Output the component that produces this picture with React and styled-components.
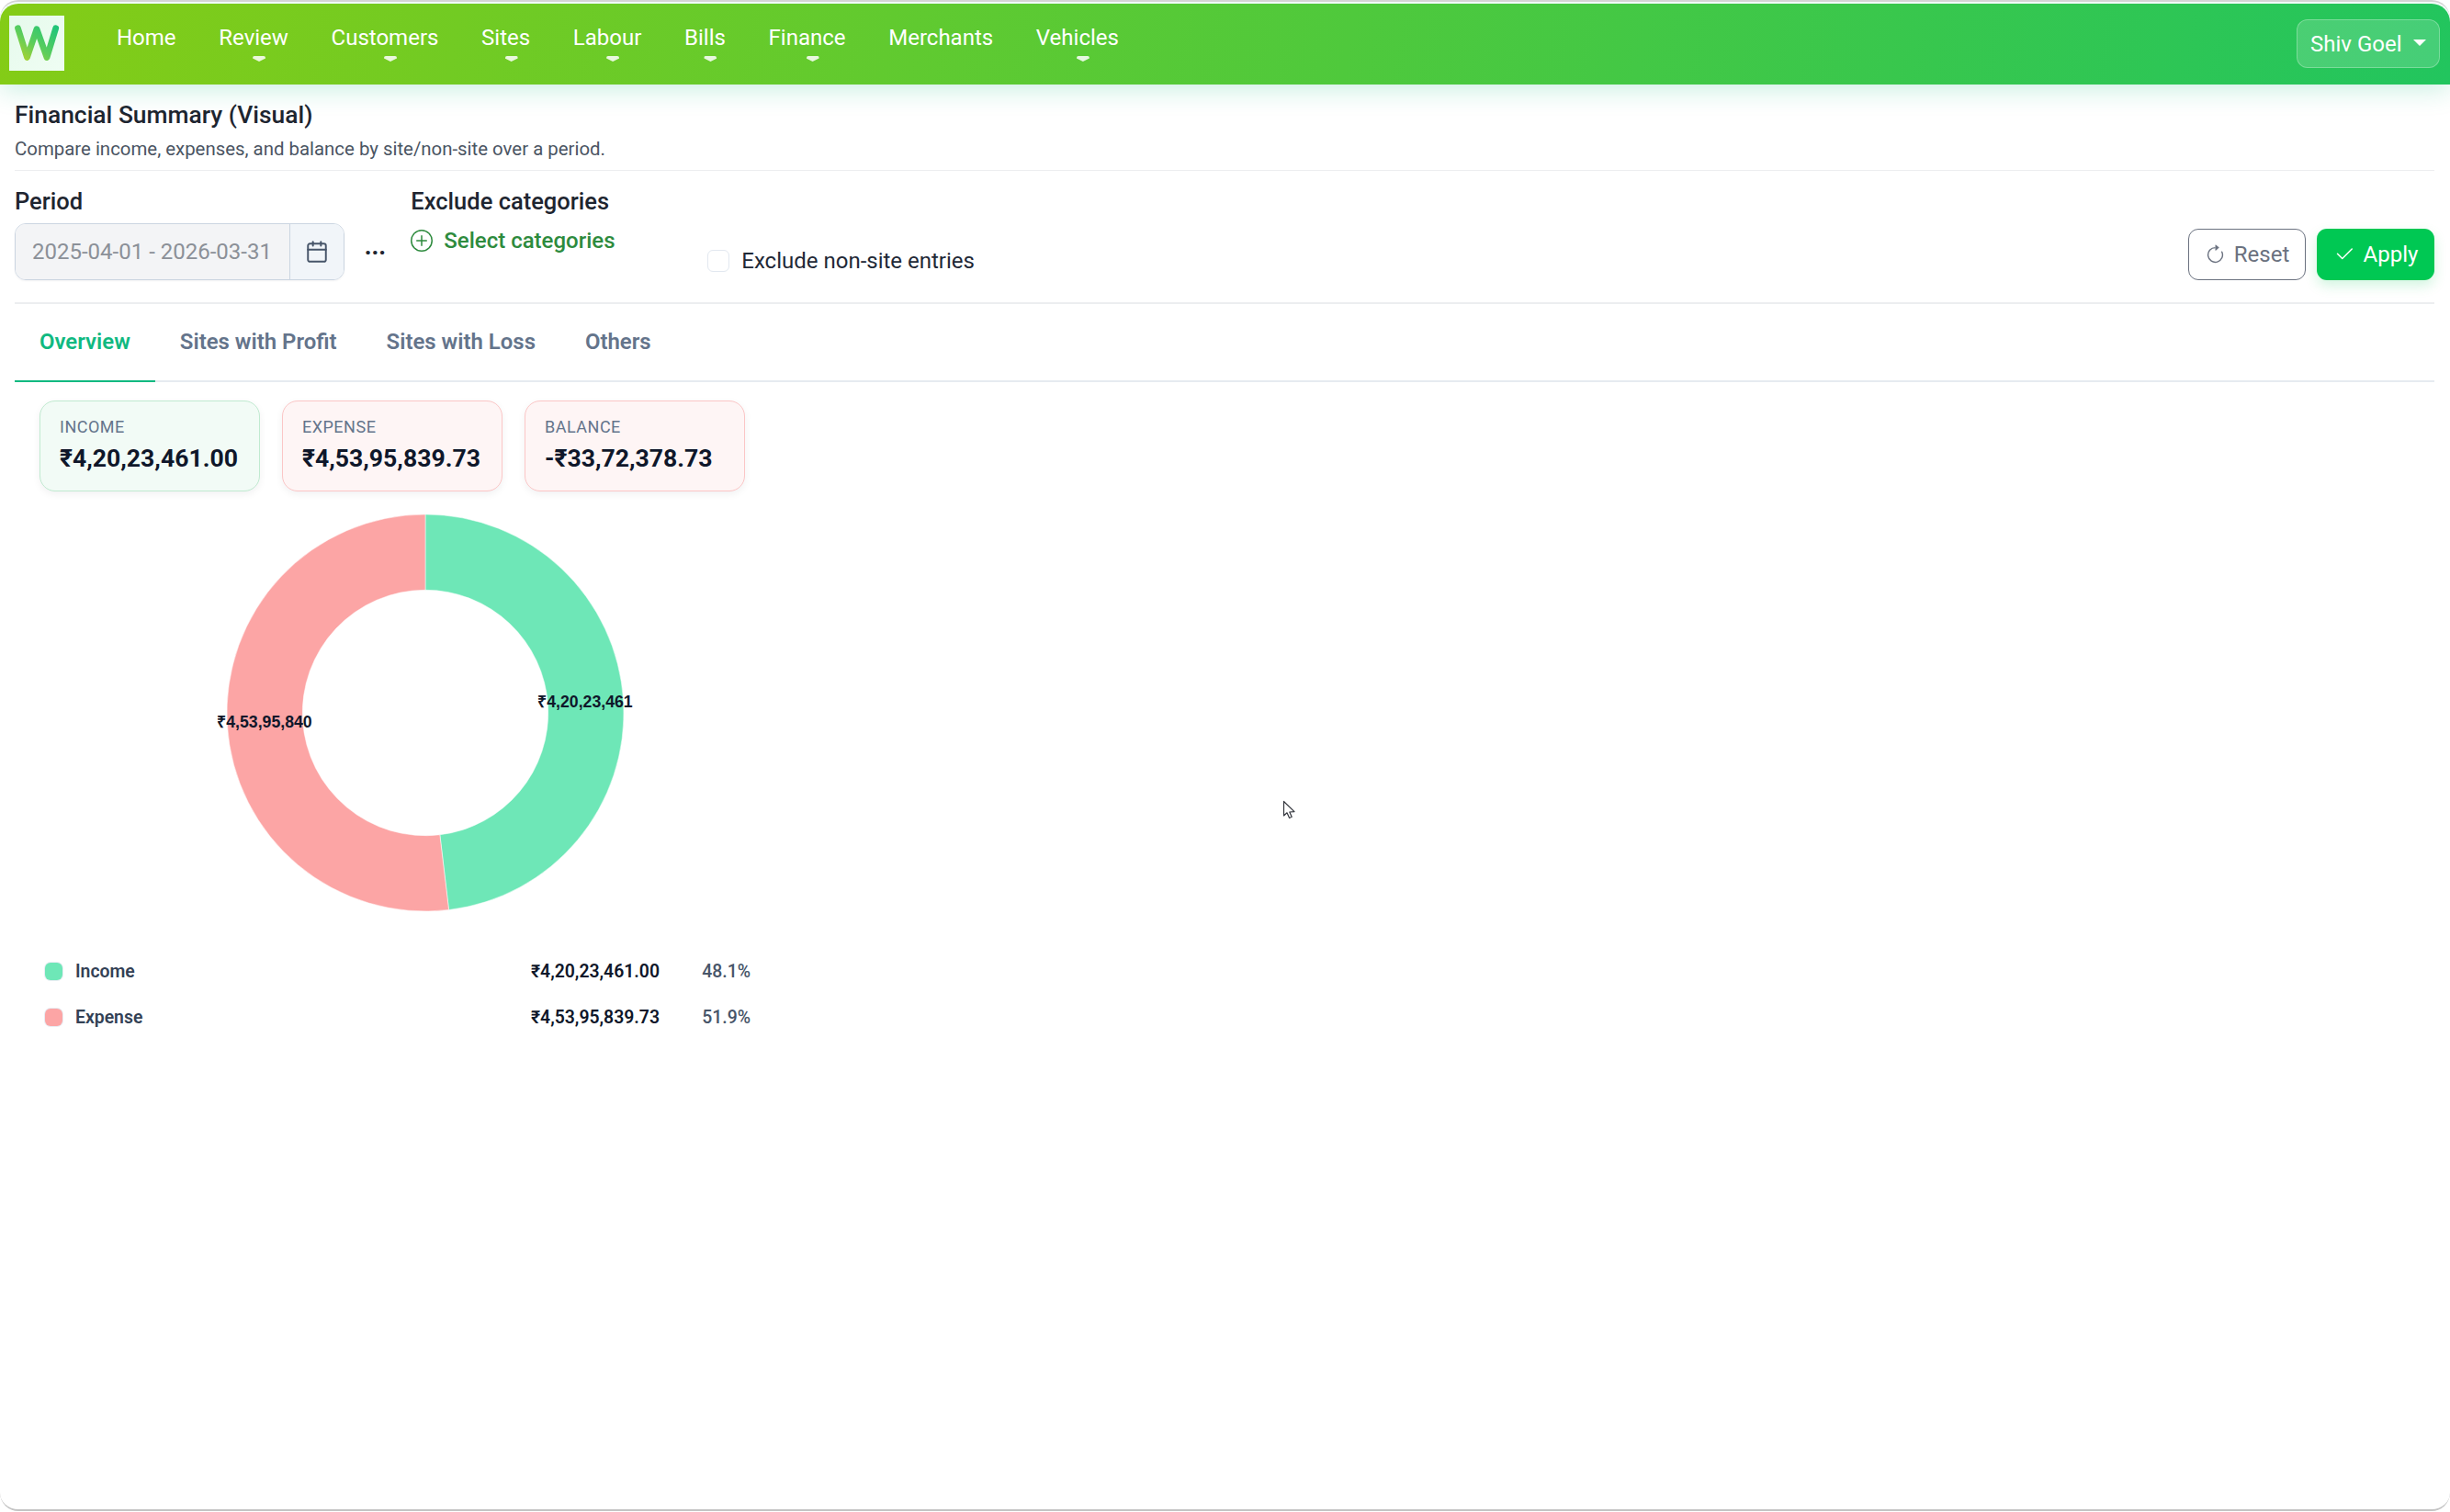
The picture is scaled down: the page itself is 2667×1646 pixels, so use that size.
import React from "react";
import styled, { createGlobalStyle } from "styled-components";
import { Calendar } from "lucide-react";
import { BsArrowClockwise, BsCheck2, BsPlusCircle } from "react-icons/bs";

const GlobalStyle = createGlobalStyle`
  html, body {
    margin: 0;
    padding: 0;
    background: #fff;
  }
  body {
    font-family: Roboto, "Noto Sans", sans-serif;
    color: #1f2937;
  }
  * {
    box-sizing: border-box;
  }
`;

const Frame = styled.div`
  position: relative;
  width: 2667px;
  height: 1645px;
  padding-top: 2px;
  background: #fff;
  border-top: 2px solid #d4d4d4;
  border-bottom: 2px solid #c4c4c4;
  border-radius: 20px;
  overflow: hidden;
`;

const Navbar = styled.nav`
  display: flex;
  align-items: center;
  height: 88px;
  padding: 0 11px 0 10px;
  background: linear-gradient(100deg, #84cc16 0%, #4fc93c 55%, #22c55e 100%);
  box-shadow: 0 6px 28px rgba(16, 185, 129, 0.22);
  border-radius: 20px 20px 0 0;
  position: relative;
`;

const Brand = styled.div`
  display: flex;
  width: 60px;
  height: 60px;
  margin-top: -2px;
  background: linear-gradient(135deg, #e6faec, #effdf3);
`;

const NavList = styled.div`
  display: flex;
  gap: 46.7px;
  margin-left: 57px;
  flex: 1;
`;

const NavLink = styled.a`
  position: relative;
  display: block;
  padding-bottom: 14px;
  color: #fff;
  font-size: 24px;
  line-height: 28px;
  white-space: nowrap;
`;

const NavCaret = styled.span`
  position: absolute;
  left: calc(50% - 1px);
  top: 34px;
  width: 14px;
  height: 6px;
  background: rgba(255, 255, 255, 0.85);
  clip-path: polygon(0 0, 100% 0, 100% 40%, 50% 100%, 0 40%);
  border-radius: 2px;
`;

const UserButton = styled.button`
  display: flex;
  align-items: center;
  width: 156px;
  height: 53px;
  margin-top: -1px;
  padding: 0 14px;
  background: rgba(255, 255, 255, 0.16);
  border: 1px solid rgba(255, 255, 255, 0.28);
  border-radius: 12px;
  color: #fff;
  font: 400 24px Roboto, sans-serif;
  white-space: nowrap;
`;

const UserCaret = styled.span`
  margin-left: 13px;
  margin-top: -3px;
  width: 0;
  height: 0;
  border-left: 7px solid transparent;
  border-right: 7px solid transparent;
  border-top: 7px solid #fff;
`;

const Header = styled.header`
  margin: 0 17px 0 16px;
  padding: 17px 0 9px;
  border-bottom: 1px solid #eceef0;
`;

const Title = styled.h1`
  margin: 0;
  font-size: 26.4px;
  font-weight: 500;
  line-height: 32px;
  color: #1e2530;
`;

const Subtitle = styled.p`
  margin: 7px 0 0;
  font-size: 20.4px;
  line-height: 28px;
  color: #4b5563;
`;

const FilterBar = styled.section`
  display: flex;
  align-items: flex-end;
  margin: 0 17px 0 16px;
  height: 145px;
  padding-bottom: 24px;
  border-bottom: 2px solid #eceef0;
`;

const Label = styled.div`
  font-size: 25.5px;
  font-weight: 500;
  line-height: 30px;
  color: #1e2530;
`;

const DateGroup = styled.div`
  display: flex;
  width: 359px;
  height: 62px;
  margin-top: 9px;
  border: 1px solid #cbd5e1;
  border-radius: 12px;
  overflow: hidden;
  box-shadow: 0 1px 2px rgba(15, 23, 42, 0.05);
`;

const DateValue = styled.div`
  flex: 1;
  padding-left: 18px;
  background: #f3f4f6;
  color: #8b9098;
  font-size: 24px;
  line-height: 60px;
  white-space: nowrap;
`;

const DateIcon = styled.div`
  display: flex;
  align-items: center;
  justify-content: center;
  width: 59px;
  background: #f1f5f9;
  border-left: 1px solid #cbd5e1;
  color: #475569;
`;

const MoreDots = styled.span`
  margin: 0 27px 24px 22px;
  font-size: 24px;
  font-weight: 900;
  line-height: 24px;
  color: #1e2530;
  letter-spacing: 0.5px;
`;

const CategoryGroup = styled.div`
  width: 323px;
  height: 101px;
`;

const SelectLink = styled.a`
  display: flex;
  align-items: center;
  gap: 12px;
  margin-top: 14px;
  font-size: 24px;
  font-weight: 500;
  line-height: 28px;
  color: #2e8b3e;
`;

const CheckRow = styled.label`
  display: flex;
  align-items: center;
  gap: 13px;
  margin-bottom: 8px;
  font-size: 24px;
  line-height: 26px;
  color: #1f2937;
`;

const CheckBox = styled.span`
  width: 24px;
  height: 24px;
  background: #fff;
  border: 1px solid #e2e8f0;
  border-radius: 6px;
`;

const Actions = styled.div`
  display: flex;
  gap: 12px;
  margin-left: auto;
`;

const ActionButton = styled.button`
  display: flex;
  align-items: center;
  justify-content: center;
  gap: 9px;
  width: 128px;
  height: 56px;
  padding: 0;
  border-radius: 11px;
  font: 400 24px Roboto, sans-serif;
  color: ${(p) => (p.$primary ? "#fff" : "#6b7280")};
  background: ${(p) => (p.$primary ? "#00c853" : "#fff")};
  border: ${(p) => (p.$primary ? "none" : "1.5px solid #6b7280")};
  box-shadow: ${(p) => (p.$primary ? "0 6px 14px rgba(0, 200, 83, 0.18)" : "none")};
`;

const TabBar = styled.div`
  display: flex;
  margin: 0 17px 0 16px;
  border-bottom: 2px solid #e6ebf0;
`;

const Tab = styled.div`
  height: 85px;
  margin-bottom: -2px;
  padding: 0 27px;
  font-size: 23.95px;
  font-weight: 600;
  line-height: 83px;
  color: ${(p) => (p.$active ? "#10b981" : "#64748b")};
  border-bottom: 2px solid ${(p) => (p.$active ? "#10b981" : "transparent")};
`;

const Cards = styled.div`
  display: flex;
  gap: 24px;
  margin: 20px 0 0 43px;
`;

const Card = styled.div`
  width: 240px;
  height: 99px;
  padding: 17px 0 0 21px;
  border-radius: 17px;
  border: 1px solid ${(p) => (p.$tone === "good" ? "#c0ead0" : "#fbc6c6")};
  background: ${(p) => (p.$tone === "good" ? "#f2fbf6" : "#fef5f5")};
  box-shadow: 0 3px 8px rgba(15, 23, 42, 0.06);
`;

const CardLabel = styled.div`
  font-size: 18px;
  letter-spacing: 0.5px;
  line-height: 22px;
  color: #64748b;
`;

const CardValue = styled.div`
  margin-top: 6px;
  font-size: 26.6px;
  font-weight: 700;
  line-height: 34px;
  color: #0f172a;
  white-space: nowrap;
`;

const ChartBox = styled.div`
  width: 480px;
  height: 480px;
  margin: 1px 0 0 223px;
`;

const ChartLabel = styled.text`
  font-family: "Liberation Sans", Arial, sans-serif;
  font-size: 17.7px;
  font-weight: 700;
  fill: #0f172a;
  text-anchor: middle;
  dominant-baseline: central;
`;

const Legend = styled.div`
  width: 768px;
  margin: 16px 0 0 49px;
`;

const LegendRow = styled.div`
  display: flex;
  align-items: center;
  height: 50px;
  font-size: 19.4px;
`;

const Swatch = styled.span`
  width: 19px;
  height: 19px;
  margin-right: 14px;
  border-radius: 6px;
  background: ${(p) => p.$color};
  box-shadow: 0 0 0 1px #e8edf3;
`;

const LegendName = styled.span`
  flex: 1;
  font-weight: 600;
  color: #334155;
`;

const LegendAmount = styled.span`
  font-weight: 600;
  color: #0f172a;
`;

const LegendPct = styled.span`
  width: 99px;
  text-align: right;
  font-weight: 500;
  color: #475569;
`;

const Cursor = styled.svg`
  position: absolute;
  left: 1396px;
  top: 869px;
`;

const navItems = [
  { label: "Home" },
  { label: "Review", caret: true },
  { label: "Customers", caret: true },
  { label: "Sites", caret: true },
  { label: "Labour", caret: true },
  { label: "Bills", caret: true },
  { label: "Finance", caret: true },
  { label: "Merchants" },
  { label: "Vehicles", caret: true },
];

const tabs = ["Overview", "Sites with Profit", "Sites with Loss", "Others"];

const cards = [
  { label: "INCOME", value: "₹4,20,23,461.00", tone: "good" },
  { label: "EXPENSE", value: "₹4,53,95,839.73", tone: "bad" },
  { label: "BALANCE", value: "-₹33,72,378.73", tone: "bad" },
];

const legend = [
  { name: "Income", amount: "₹4,20,23,461.00", pct: "48.1%", color: "#6ee7b7" },
  { name: "Expense", amount: "₹4,53,95,839.73", pct: "51.9%", color: "#fca5a5" },
];

// donut slice, angles in degrees clockwise from 12 o'clock
const slice = (cx, cy, r1, r2, from, to) => {
  const pt = (r, a) => {
    const rad = ((a - 90) * Math.PI) / 180;
    return `${cx + r * Math.cos(rad)} ${cy + r * Math.sin(rad)}`;
  };
  const large = to - from > 180 ? 1 : 0;
  return `M${pt(r1, from)} A${r1} ${r1} 0 ${large} 1 ${pt(r1, to)} L${pt(r2, to)} A${r2} ${r2} 0 ${large} 0 ${pt(r2, from)} Z`;
};

const Logo = () => (
  <svg width="60" height="60" viewBox="0 0 60 60">
    <defs>
      <linearGradient id="logoStroke" x1="0" y1="1" x2="1" y2="0">
        <stop offset="0" stopColor="#a8cf1e" />
        <stop offset="0.45" stopColor="#4fc94f" />
        <stop offset="1" stopColor="#10c06e" />
      </linearGradient>
    </defs>
    <path
      d="M9.5 13.7 L19.5 45.5 L30 14.7 L41 45.5 L50.7 13.7"
      fill="none"
      stroke="url(#logoStroke)"
      strokeWidth="6.8"
      strokeLinecap="round"
      strokeLinejoin="round"
      opacity="0.92"
    />
  </svg>
);

const Donut = () => (
  <ChartBox>
    <svg width="480" height="480" viewBox="0 0 480 480">
      <path d={slice(240, 240, 216, 133.7, 0, 173.2)} fill="#6ee7b7" stroke="#fff" strokeWidth="0.5" />
      <path d={slice(240, 240, 216, 133.7, 173.2, 360)} fill="#fca5a5" stroke="#fff" strokeWidth="0.5" />
      <ChartLabel x="414" y="228">₹4,20,23,461</ChartLabel>
      <ChartLabel x="65" y="250">₹4,53,95,840</ChartLabel>
    </svg>
  </ChartBox>
);

export default function App() {
  return (
    <>
      <GlobalStyle />
      <Frame>
        <Navbar>
          <Brand>
            <Logo />
          </Brand>
          <NavList>
            {navItems.map((item) => (
              <NavLink key={item.label}>
                {item.label}
                {item.caret && <NavCaret />}
              </NavLink>
            ))}
          </NavList>
          <UserButton>
            Shiv Goel
            <UserCaret />
          </UserButton>
        </Navbar>

        <Header>
          <Title>Financial Summary (Visual)</Title>
          <Subtitle>Compare income, expenses, and balance by site/non-site over a period.</Subtitle>
        </Header>

        <FilterBar>
          <div>
            <Label>Period</Label>
            <DateGroup>
              <DateValue>2025-04-01 - 2026-03-31</DateValue>
              <DateIcon>
                <Calendar size={26} strokeWidth={1.8} />
              </DateIcon>
            </DateGroup>
          </div>
          <MoreDots>...</MoreDots>
          <CategoryGroup>
            <Label>Exclude categories</Label>
            <SelectLink>
              <BsPlusCircle size={24} />
              Select categories
            </SelectLink>
          </CategoryGroup>
          <CheckRow>
            <CheckBox />
            Exclude non-site entries
          </CheckRow>
          <Actions>
            <ActionButton>
              <BsArrowClockwise size={23} />
              Reset
            </ActionButton>
            <ActionButton $primary>
              <BsCheck2 size={24} />
              Apply
            </ActionButton>
          </Actions>
        </FilterBar>

        <TabBar>
          {tabs.map((tab, i) => (
            <Tab key={tab} $active={i === 0}>
              {tab}
            </Tab>
          ))}
        </TabBar>

        <Cards>
          {cards.map((card) => (
            <Card key={card.label} $tone={card.tone}>
              <CardLabel>{card.label}</CardLabel>
              <CardValue>{card.value}</CardValue>
            </Card>
          ))}
        </Cards>

        <Donut />

        <Legend>
          {legend.map((row) => (
            <LegendRow key={row.name}>
              <Swatch $color={row.color} />
              <LegendName>{row.name}</LegendName>
              <LegendAmount>{row.amount}</LegendAmount>
              <LegendPct>{row.pct}</LegendPct>
            </LegendRow>
          ))}
        </Legend>

        <Cursor width="14" height="22" viewBox="0 0 14 22">
          <path
            d="M1.5 1.5 V17 L5 13.8 L7.6 19.5 L10.2 18.3 L7.8 13 L13 12.6 Z"
            fill="#fff"
            stroke="#33363d"
            strokeWidth="1.2"
            strokeLinejoin="round"
          />
        </Cursor>
      </Frame>
    </>
  );
}
